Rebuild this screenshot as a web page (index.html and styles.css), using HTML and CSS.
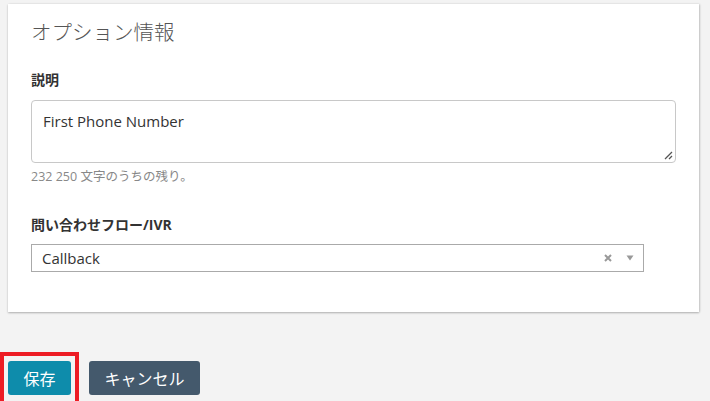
FILE: index.html
```html
<!DOCTYPE html>
<html lang="ja">
<head>
<meta charset="utf-8">
<link rel="stylesheet" href="styles.css">
</head>
<body>
<div class="card">
  <h2 class="title">オプション情報</h2>
  <div class="field">
    <label class="label">説明</label>
    <div class="textarea">
      <span class="ta-text">First Phone Number</span>
      <svg class="grip" width="10" height="10" viewBox="0 0 10 10"><path d="M9 2 L2 9 M9 6 L6 9" stroke="#555" stroke-width="1.3" fill="none"/></svg>
    </div>
    <div class="hint">232 250 文字のうちの残り。</div>
  </div>
  <div class="field field2">
    <label class="label">問い合わせフロー/IVR</label>
    <div class="select">
      <span class="sel-text">Callback</span>
      <span class="sel-icons">
        <svg class="clear" width="8" height="8" viewBox="0 0 8 8"><path d="M1 1 L7 7 M7 1 L1 7" stroke="#999" stroke-width="2" fill="none"/></svg>
        <svg class="caret" width="8" height="6" viewBox="0 0 8 6"><path d="M0.5 0.5 H7.5 L4 5.5 Z" fill="#999"/></svg>
      </span>
    </div>
  </div>
</div>
<div class="actions">
  <div class="highlight"><button class="btn btn-primary">保存</button></div>
  <button class="btn btn-secondary">キャンセル</button>
</div>
</body>
</html>
```
FILE: styles.css
```css
html, body {
  margin: 0;
  padding: 0;
  background: #f3f3f3;
  font-family: "Open Sans", "Noto Sans CJK JP", sans-serif;
  color: #333;
}
.card {
  background: #fff;
  margin: 4px 11px 0 8px;
  height: 308px;
  box-sizing: border-box;
  padding: 14px 22px 0 23px;
  box-shadow: 0 1px 2px rgba(0,0,0,0.25), 1px 0 2px rgba(0,0,0,0.12);
}
.title {
  margin: 0;
  font-size: 20.5px;
  font-weight: 300;
  color: #555;
  line-height: 28px;
}
.field {
  margin-top: 24px;
  display: flex;
  flex-direction: column;
}
.field2 {
  margin-top: 29px;
}
.label {
  font-size: 14px;
  font-weight: bold;
  color: #333;
  line-height: 20px;
  margin-bottom: 10px;
}
.field2 .label {
  margin-bottom: 9px;
}
.textarea {
  position: relative;
  width: 645px;
  height: 63px;
  box-sizing: border-box;
  border: 1px solid #c8c8c8;
  border-radius: 4px;
  padding: 9px 11px;
}
.ta-text {
  font-size: 15px;
  color: #333;
  line-height: 20px;
}
.grip {
  position: absolute;
  right: 2px;
  bottom: 2px;
}
.hint {
  margin-top: 5px;
  font-size: 12.5px;
  color: #888;
  line-height: 18px;
}
.select {
  width: 613px;
  height: 28px;
  box-sizing: border-box;
  border: 1px solid #aaa;
  display: flex;
  align-items: center;
  justify-content: space-between;
  padding: 0 9px 0 10px;
}
.sel-text {
  font-size: 15px;
  color: #333;
}
.sel-icons {
  display: flex;
  align-items: center;
  gap: 14px;
}
.actions {
  display: flex;
  align-items: flex-end;
  margin-top: 40px;
}
.highlight {
  border: 4px solid #ed1c24;
  border-bottom: none;
  padding: 5px 4px 0 4px;
}
.btn {
  font-family: "Open Sans", "Noto Sans CJK JP", sans-serif;
  font-size: 16px;
  color: #fff;
  border: none;
  border-radius: 3px;
  height: 34px;
  display: flex;
  align-items: center;
  justify-content: center;
}
.btn-primary {
  background: #0e8cab;
  width: 63px;
  margin-bottom: 6px;
}
.btn-secondary {
  background: #44596c;
  width: 111px;
  margin-left: 10px;
  margin-bottom: 6px;
}
```
